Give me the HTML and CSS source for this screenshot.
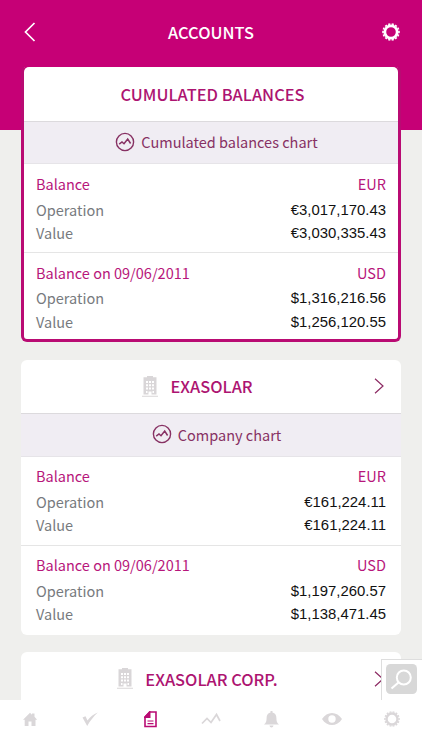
FILE: index.html
```html
<!DOCTYPE html>
<html lang="en">
<head>
    <meta charset="UTF-8">
    <meta name="viewport" content="width=device-width, initial-scale=1.0">
    <title>Accounts</title>
    <link rel="stylesheet" href="styles.css">
</head>
<body>
    <!-- Shared icons -->
    <svg class="sprite" width="0" height="0">
        <symbol id="gear" viewBox="0 0 18 18">
            <circle cx="9" cy="9" r="6.2" fill="none" stroke="currentColor" stroke-width="2.8"/>
            <circle cx="9" cy="9" r="8" fill="none" stroke="currentColor" stroke-width="1.6" pathLength="56" stroke-dasharray="2.4 1.6" stroke-dashoffset="1.2"/>
        </symbol>
        <symbol id="chart" viewBox="0 0 20 20">
            <circle cx="10" cy="10" r="8.6" fill="none" stroke="currentColor" stroke-width="1.4"/>
            <path d="M4.200 12.200l2.800-2.200 2 1.700 3.700-4.700 2.900 4.500" fill="none" stroke="currentColor" stroke-width="1.5"/>
        </symbol>
        <symbol id="building" viewBox="0 0 16 21">
            <path fill="currentColor" fill-rule="evenodd" d="M5 0h6v1.3h3.500V18.500H9.500V15.500H6.500V18.500H1.500V1.300H5zM4 5v2h2V5zM7 5v2h2V5zM10 5v2h2V5zM4 8.300v2h2v-2zM7 8.300v2h2v-2zM10 8.300v2h2v-2zM4 11.600v2h2v-2zM7 11.600v2h2v-2zM10 11.600v2h2v-2zM4 15v2h1.500v-2zM10.500 15v2h1.500v-2zM0 19.700h16v1H0z"/>
        </symbol>
        <symbol id="next" viewBox="0 0 10 16">
            <path d="M1 .8l8 7.200-8 7.200" fill="none" stroke="currentColor" stroke-width="1.2"/>
        </symbol>
    </svg>

    <div class="app">
        <header class="header">
            <svg class="back" width="12" height="20" viewBox="0 0 12 20"><path d="M10.500 1L1.500 10l9 9" fill="none" stroke="currentColor" stroke-width="1.7"/></svg>
            <h1>ACCOUNTS</h1>
            <svg class="settings" width="18" height="18"><use href="#gear"/></svg>
        </header>

        <main class="content">
            <section class="card selected">
                <div class="card-title">CUMULATED BALANCES</div>
                <div class="chart-link"><svg width="20" height="20"><use href="#chart"/></svg><span>Cumulated balances chart</span></div>
                <div class="balance">
                    <div class="row head"><span>Balance</span><span>EUR</span></div>
                    <div class="row"><span>Operation</span><span class="amount">€3,017,170.43</span></div>
                    <div class="row"><span>Value</span><span class="amount">€3,030,335.43</span></div>
                </div>
                <div class="balance">
                    <div class="row head"><span>Balance on 09/06/2011</span><span>USD</span></div>
                    <div class="row"><span>Operation</span><span class="amount">$1,316,216.56</span></div>
                    <div class="row"><span>Value</span><span class="amount">$1,256,120.55</span></div>
                </div>
            </section>

            <section class="card">
                <div class="card-title company"><svg class="building" width="16" height="21"><use href="#building"/></svg><span>EXASOLAR</span><svg class="next" width="10" height="16"><use href="#next"/></svg></div>
                <div class="chart-link"><svg width="20" height="20"><use href="#chart"/></svg><span>Company chart</span></div>
                <div class="balance">
                    <div class="row head"><span>Balance</span><span>EUR</span></div>
                    <div class="row"><span>Operation</span><span class="amount">€161,224.11</span></div>
                    <div class="row"><span>Value</span><span class="amount">€161,224.11</span></div>
                </div>
                <div class="balance">
                    <div class="row head"><span>Balance on 09/06/2011</span><span>USD</span></div>
                    <div class="row"><span>Operation</span><span class="amount">$1,197,260.57</span></div>
                    <div class="row"><span>Value</span><span class="amount">$1,138,471.45</span></div>
                </div>
            </section>

            <section class="card last">
                <div class="card-title company"><svg class="building" width="16" height="21"><use href="#building"/></svg><span>EXASOLAR CORP.</span><svg class="next" width="10" height="16"><use href="#next"/></svg></div>
            </section>

            <div class="search">
                <svg width="31" height="30" viewBox="0 0 31 30"><rect width="31" height="30" rx="4.500" fill="#d8d8d8"/><circle cx="17.800" cy="13.500" r="7" fill="none" stroke="#fff" stroke-width="2"/><path d="M12.500 18.500L5.500 24.500" stroke="#fff" stroke-width="2.200"/></svg>
            </div>
        </main>

        <nav class="tabs">
            <a><svg width="16" height="15" viewBox="0 0 16 15"><path fill="currentColor" d="M1 7.800L8 .8l2 2V1.500h2.500v3.300L15.200 7.800h-1.700V14H9.500V9.500h-3V14H2.700V7.800z"/></svg></a>
            <a><svg width="16" height="15" viewBox="0 0 16 15"><path fill="currentColor" d="M.5 5.500L3.500 4.300l2 4.200C8 5 11.500 2 15.800.5 11.500 4.500 8 9 5.200 14z"/></svg></a>
            <a class="active"><svg width="13" height="17" viewBox="0 0 13 17"><path d="M5.800 1H12v14.500H1V6z" fill="none" stroke="currentColor" stroke-width="1.600"/><path d="M5.500 0L0 6v1h6.500V0z" fill="currentColor"/><path d="M3.500 10h6M3.500 12.700h6" stroke="currentColor" stroke-width="1.200"/></svg></a>
            <a><svg width="20" height="14" viewBox="0 0 20 14"><path d="M1 11.500l5-5 4 4 5.500-8 3.500 6.500" fill="none" stroke="currentColor" stroke-width="1.700"/></svg></a>
            <a><svg width="15" height="17" viewBox="0 0 15 17"><path fill="currentColor" d="M6.500 0h2v1.500c2.800.6 3.900 2.600 3.900 5.500 0 3.200.4 4.700 2.600 6.500H0C2.200 11.700 2.600 10.200 2.600 7c0-2.900 1.100-4.900 3.900-5.500zM5.500 14.500h4c-.3 2.500-3.700 2.500-4 0z"/></svg></a>
            <a><svg width="20" height="12" viewBox="0 0 20 12"><path fill="currentColor" fill-rule="evenodd" d="M0 6C5-2 15-2 20 6 15 14 5 14 0 6zM10 2.300a3.700 3.700 0 1 0 0 7.400 3.700 3.700 0 0 0 0-7.400z"/></svg></a>
            <a><svg width="16" height="16"><use href="#gear"/></svg></a>
        </nav>
    </div>
</body>
</html>
```
FILE: styles.css
```css
* {
    box-sizing: border-box;
}
body {
    margin: 0;
    font-family: "Noto Sans CJK SC", "Open Sans", sans-serif;
    font-size: 14.5px;
    color: #777a7e;
    background-color: #efefed;
}
svg {
    display: block;
    flex: none;
}
.sprite {
    position: absolute;
}
.app {
    display: flex;
    flex-direction: column;
    height: 750px;
    overflow: hidden;
}
.header {
    display: flex;
    flex: none;
    align-items: center;
    justify-content: space-between;
    height: 64px;
    padding: 0 22px 0 24px;
    background-color: #c60076;
    color: #fff;
}
.header h1 {
    margin: 0 0 0 4px;
    font-size: 16.4px;
    font-weight: 500;
}
.content {
    position: relative;
    flex: 1;
    min-height: 0;
    padding: 0 21px;
    overflow: hidden;
    background: linear-gradient(#c60076 66px, #efefed 66px);
}
.card {
    margin-bottom: 17px;
    padding-bottom: 1px;
    border-radius: 6px;
    background-color: #fff;
    overflow: hidden;
}
.card.selected {
    margin-bottom: 18px;
    padding-bottom: 0;
    border: 3px solid #b90b73;
    border-top-color: #c60076;
    border-radius: 8px 8px 6px 6px;
}
.card-title {
    display: flex;
    align-items: center;
    justify-content: center;
    height: 54px;
    padding: 0 0 1px 3px;
    font-size: 16.4px;
    font-weight: 500;
    color: #ad1471;
}
.card-title.company {
    height: 53px;
    padding: 0 17px 1px 0;
}
.card.last .company {
    padding: 0 17px 0 0;
}
.building {
    margin-left: auto;
    margin-right: 12px;
    color: #d9d6d8;
}
.next {
    margin-left: auto;
    color: #8c2a63;
}
.chart-link {
    display: flex;
    align-items: center;
    justify-content: center;
    gap: 6px;
    height: 43px;
    padding: 0 0 2px 11px;
    border-top: 1px solid #dcdadd;
    border-bottom: 1px solid #e6e4e8;
    background-color: #f0edf3;
    color: #873163;
}
.company + .chart-link {
    height: 44px;
}
.balance {
    height: 88px;
    padding: 5.5px 12px 0;
}
.balance + .balance {
    height: 87px;
    padding-top: 5px;
    border-top: 1px solid #e5e5e5;
}
.card:not(.selected) .balance {
    padding: 4.5px 15px 0;
}
.card:not(.selected) .balance + .balance {
    height: 89px;
}
.row {
    display: flex;
    align-items: center;
    justify-content: space-between;
    height: 23.5px;
}
.row.head {
    height: 28px;
    color: #b7167b;
}
.amount {
    padding-top: 1px;
    font-family: "Liberation Sans", Arial, sans-serif;
    font-size: 14.9px;
    color: #111;
}
.search {
    position: absolute;
    right: 0;
    bottom: 0;
    width: 41px;
    height: 41px;
    padding: 4px;
    border-top: 1px solid #dedede;
    border-left: 1px solid #dedede;
    background-color: #fff;
}
.tabs {
    display: grid;
    flex: none;
    grid-template-columns: repeat(7, 1fr);
    height: 50px;
    padding-bottom: 12px;
    background-color: #fff;
    color: #dad7d9;
}
.tabs a {
    display: flex;
    align-items: center;
    justify-content: center;
}
.tabs .active {
    color: #b90b73;
}
```
